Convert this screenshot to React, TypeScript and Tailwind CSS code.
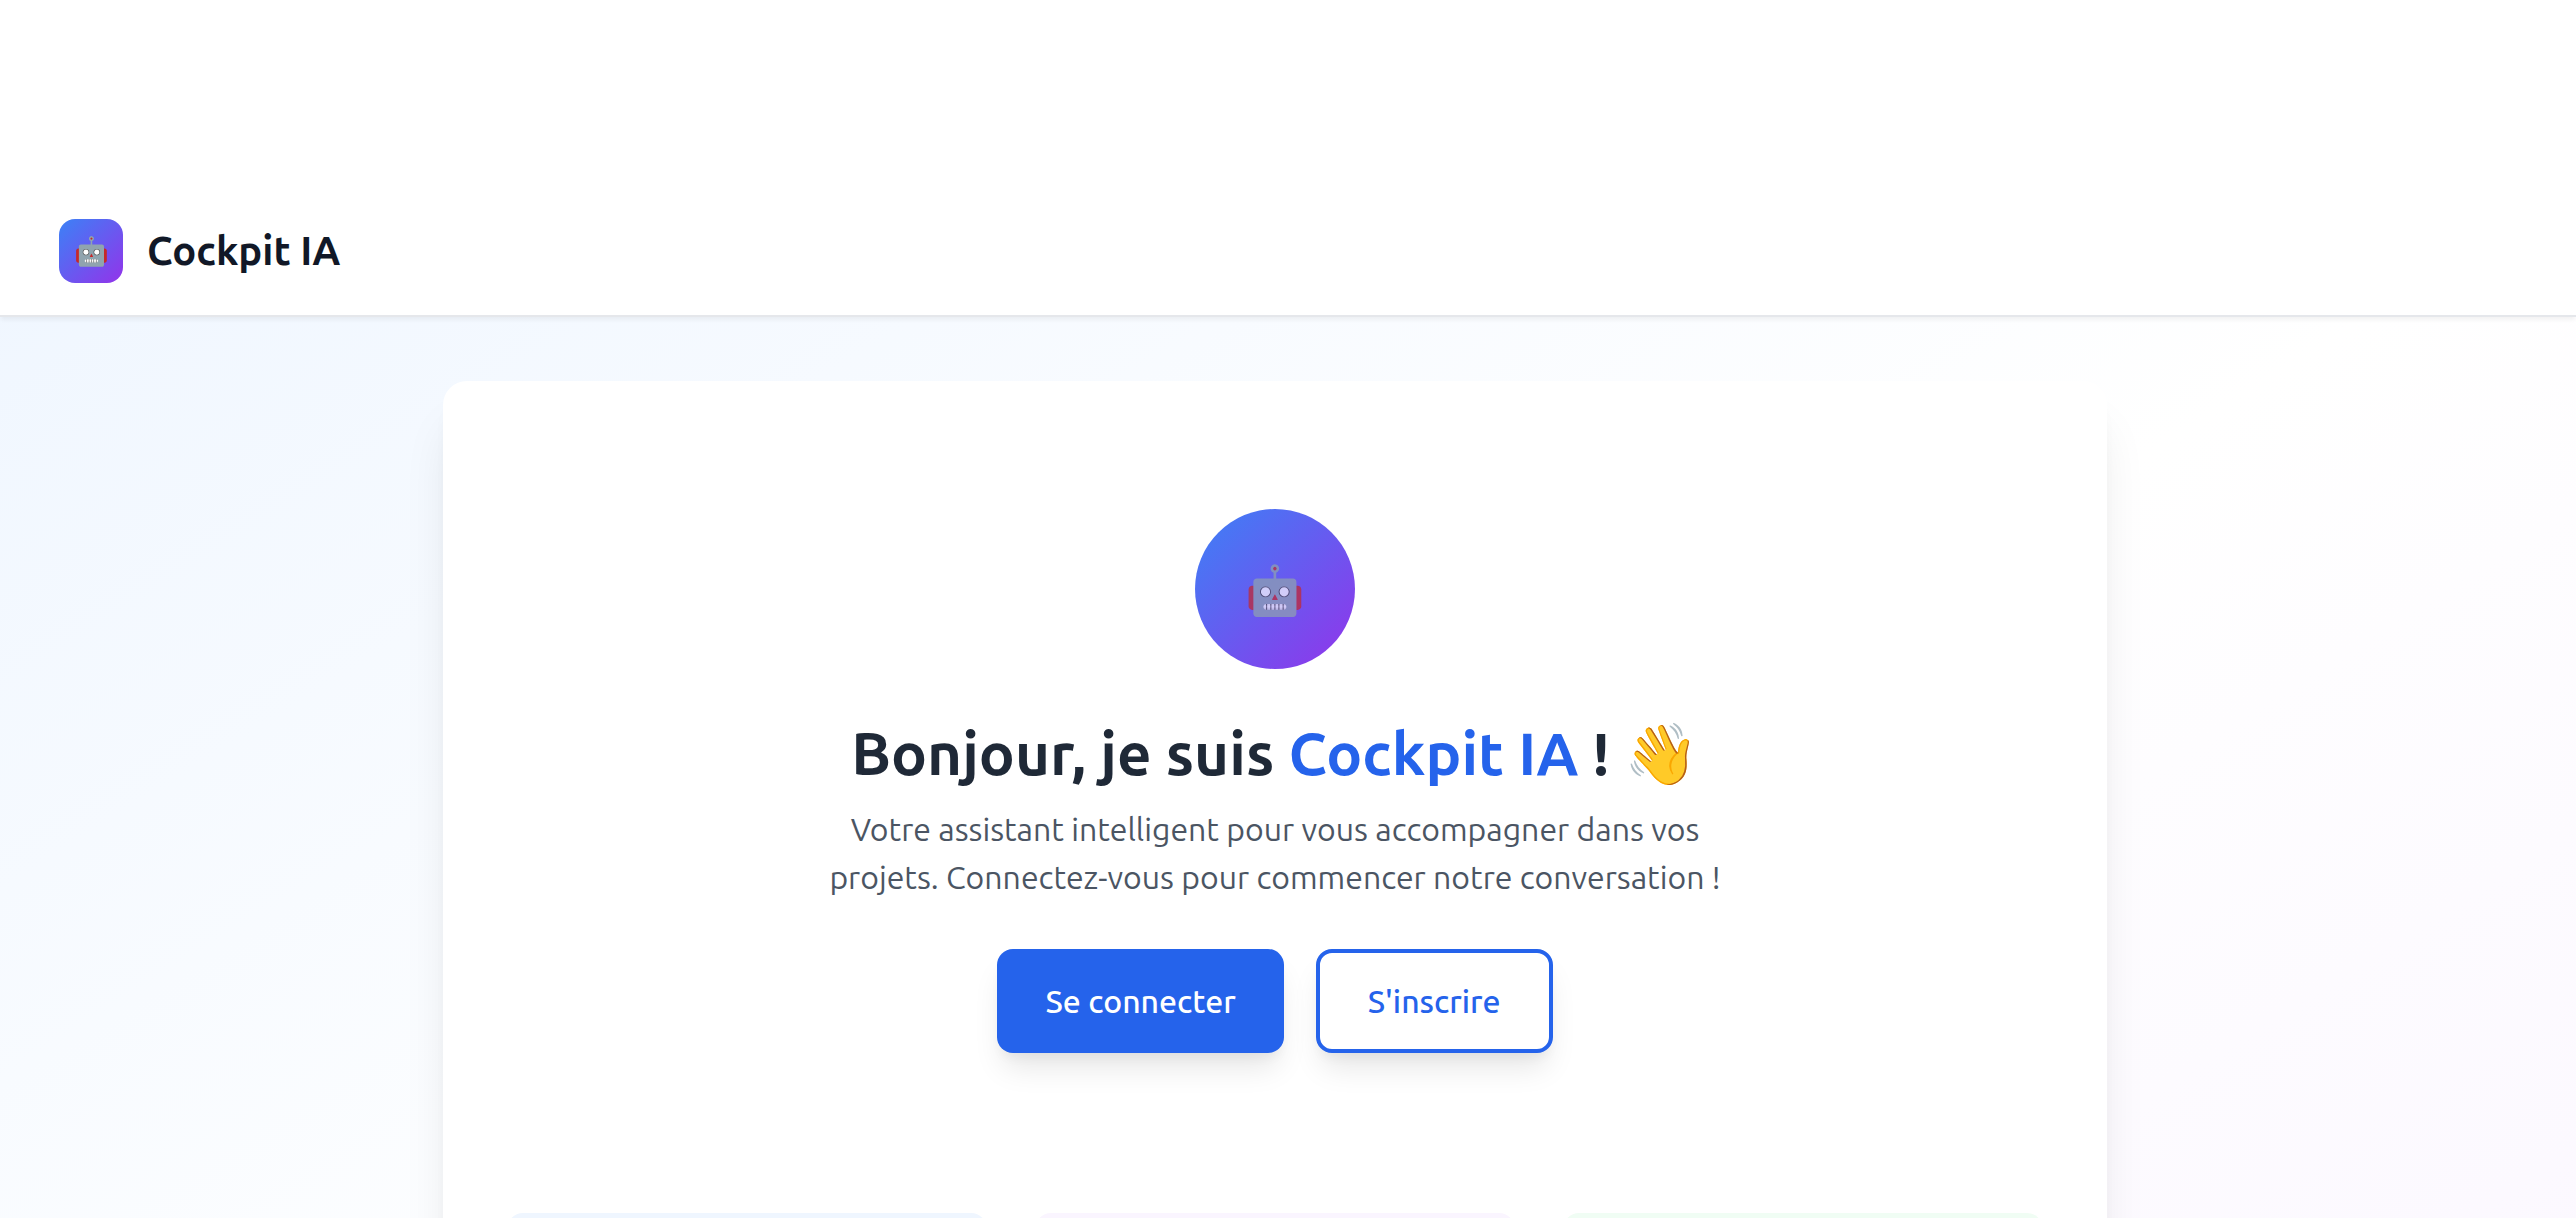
import React from 'react'

const features = [
  { id: 'assistant', className: 'bg-[#eff6ff]' },
  { id: 'projects', className: 'bg-[#faf5ff]' },
  { id: 'conversation', className: 'bg-[#f0fdf4]' }
]

const Header = () => (
  <header className="border-b-2 border-gray-200 bg-white px-[59px] py-8 shadow-[0_4px_4px_-1px_rgba(0,0,0,0.05)]">
    <div className="flex items-center gap-6">
      <div className="flex size-16 items-center justify-center rounded-2xl bg-linear-to-br/srgb from-[#3b82f6] to-[#9333ea]">
        <span className="text-[28px] leading-10" role="img" aria-label="Robot">
          🤖
        </span>
      </div>
      <span className="text-[40px] leading-14 font-bold text-[#111827]">Cockpit IA</span>
    </div>
  </header>
)

const Hero = () => (
  <section className="flex flex-col items-center px-16 pt-16 pb-24 text-center">
    <div className="mb-12 flex size-40 items-center justify-center rounded-full bg-linear-to-br/srgb from-[#3b82f6] to-[#9333ea]">
      <span className="text-[48px] leading-16 opacity-70" role="img" aria-label="Robot">
        🤖
      </span>
    </div>
    <h1 className="mb-4 text-[60px] leading-[72px] font-bold text-[#1f2937]">
      Bonjour, je suis <span className="text-[#2563eb]">Cockpit IA</span> ! 👋
    </h1>
    <p className="max-w-4xl text-[32px] leading-12 text-[#4b5563]">
      Votre assistant intelligent pour vous accompagner dans vos projets. Connectez-vous pour commencer notre
      conversation !
    </p>
    <div className="mt-12 flex gap-8 text-[32px] leading-12 font-medium">
      <button
        type="button"
        className="cursor-pointer rounded-2xl bg-[#2563eb] px-12 py-7 text-white shadow-[0_20px_30px_-6px_rgba(0,0,0,0.1),0_8px_12px_-4px_rgba(0,0,0,0.05)]"
      >
        Se connecter
      </button>
      <button
        type="button"
        className="cursor-pointer rounded-2xl border-4 border-[#2563eb] bg-white px-12 py-6 text-[#2563eb] shadow-[0_20px_30px_-6px_rgba(0,0,0,0.1),0_8px_12px_-4px_rgba(0,0,0,0.05)]"
      >
        S'inscrire
      </button>
    </div>
  </section>
)

export default function App() {
  return (
    <div className="h-screen overflow-hidden bg-white pt-[187px] font-['Ubuntu','Noto_Sans',sans-serif]">
      <div className="bg-linear-to-br/srgb from-[#eff6ff] via-white to-[#faf5ff]">
        <Header />
        <main className="py-16 pr-[26px]">
          <div className="mx-auto max-w-[1664px] rounded-3xl bg-white p-16 shadow-[0_40px_50px_-10px_rgba(0,0,0,0.1),0_16px_20px_-12px_rgba(0,0,0,0.1)]">
            <Hero />
            <div className="grid grid-cols-3 gap-12 pt-16">
              {features.map(({ id, className }) => (
                <div key={id} className={`h-112 rounded-2xl ${className}`} />
              ))}
            </div>
          </div>
        </main>
      </div>
    </div>
  )
}
